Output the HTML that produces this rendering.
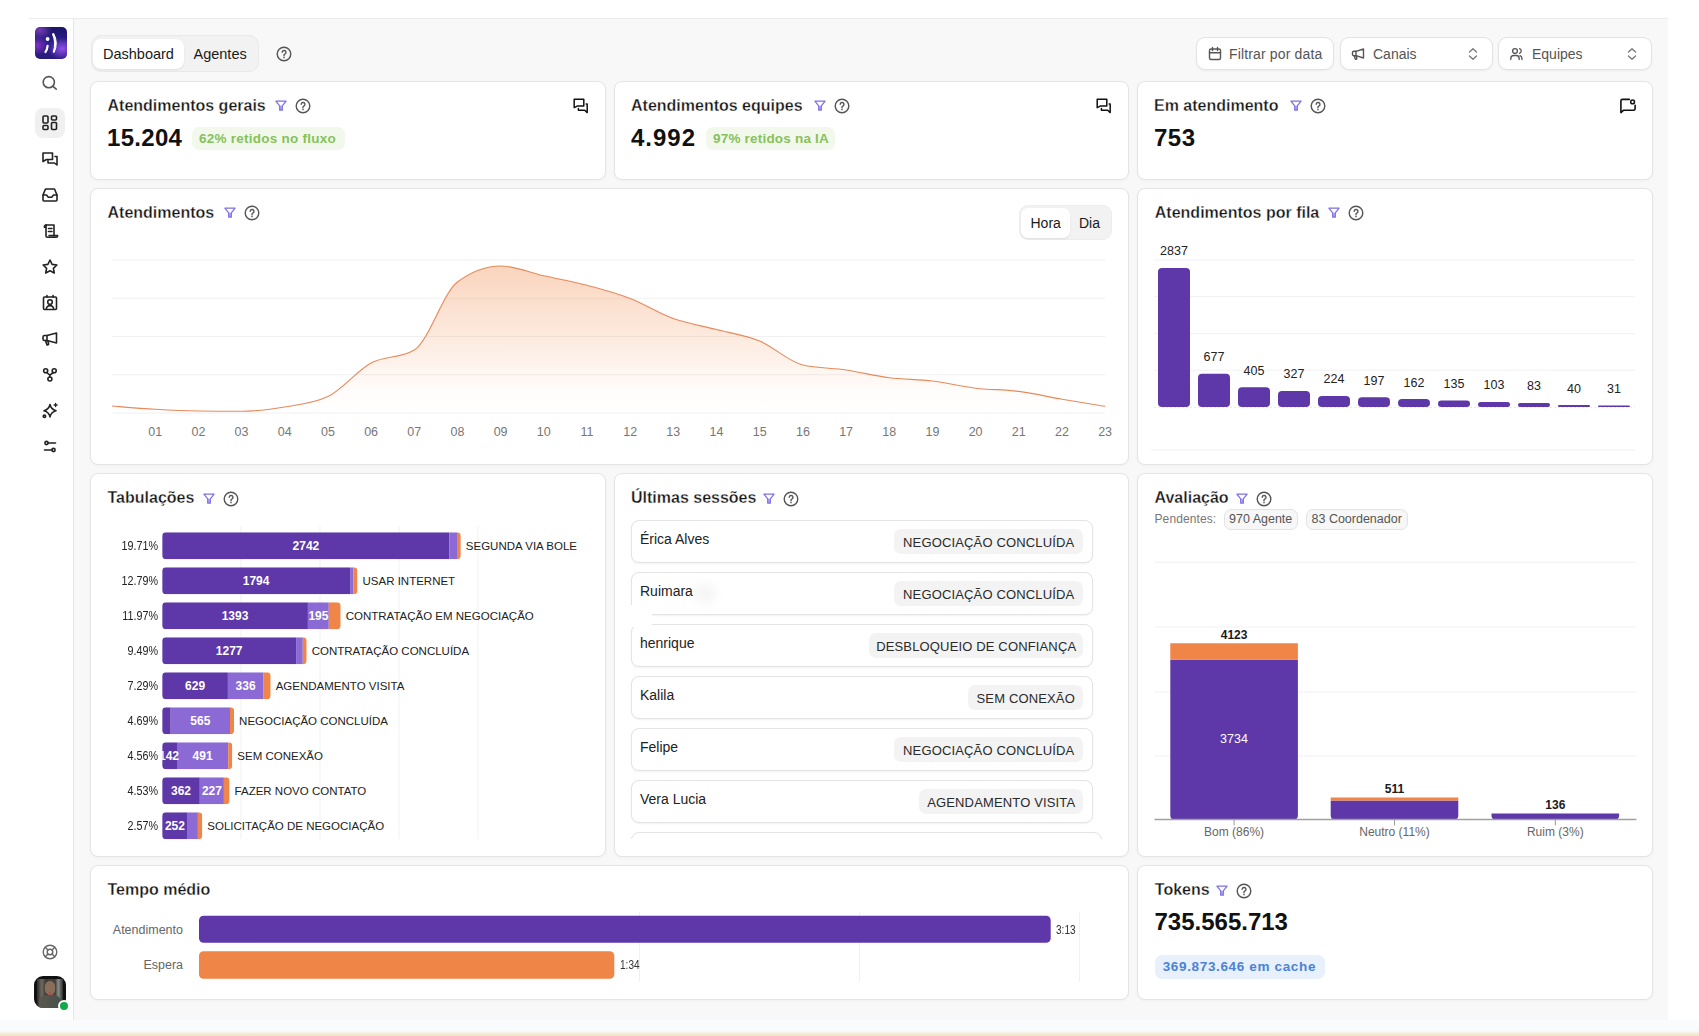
<!DOCTYPE html>
<html><head><meta charset="utf-8">
<style>
*{box-sizing:border-box;margin:0;padding:0}
html,body{width:1699px;height:1036px;overflow:hidden;background:#fff;font-family:"Liberation Sans",sans-serif;color:#1c1c1c;position:relative}
.a{position:absolute}
.t{position:absolute;line-height:1;white-space:nowrap}
#frame{left:29px;top:18px;width:1639px;height:1002px;background:#f8f8f8;border-top:1px solid #ececec}
#side{left:29px;top:18px;width:45px;height:1002px;background:#fff;border-right:1px solid #e6e6e6;border-top:1px solid #ececec}
#bottomstrip{left:0;top:1020px;width:1699px;height:16px;background:linear-gradient(#fbfbfc 0%,#f9fbfd 55%,#f8f9f8 70%,#f6f1e3 80%,#f2e8cc 90%,#f1e6c8 100%)}
.card{position:absolute;background:#fff;border:1px solid #e4e4e4;border-radius:8px;box-shadow:0 1px 3px rgba(0,0,0,0.035)}
.title{font-size:16px;font-weight:700;color:#151515;-webkit-text-stroke:0.3px #fff}
.big{font-size:24px;font-weight:700;color:#111}
.badge{position:absolute;border-radius:7px;background:#f2f9ec}
.btxt{font-size:13.5px;font-weight:700;color:#85c25a;letter-spacing:0.25px}
svg{position:absolute;overflow:visible}
.ic{fill:none;stroke:#222;stroke-width:1.6;stroke-linecap:round;stroke-linejoin:round}
</style></head><body>
<div id="frame" class="a"></div>
<div id="side" class="a"></div>
<div id="bottomstrip" class="a"></div>

<!-- logo -->
<div class="a" style="left:35px;top:27px;width:32px;height:32px;border-radius:5px;background:radial-gradient(ellipse 45% 35% at 85% 68%,rgba(150,80,240,0.95) 0%,rgba(150,80,240,0) 100%),radial-gradient(ellipse 35% 30% at 8% 58%,rgba(140,50,200,0.9) 0%,rgba(140,50,200,0) 100%),radial-gradient(ellipse 40% 30% at 15% 10%,rgba(140,70,200,0.8) 0%,rgba(140,70,200,0) 100%),linear-gradient(180deg,#1c1568 0%,#2a1f8a 50%,#2a1a7a 100%)"></div>
<svg style="left:35px;top:27px" width="32" height="32" viewBox="0 0 32 32">
<circle cx="12.6" cy="12" r="1.9" fill="#fff"/>
<path d="M12.6,18.8 Q12.2,22.3 10.5,25" stroke="#fff" stroke-width="2.2" fill="none" stroke-linecap="round"/>
<path d="M18.7,6.4 Q23.6,15.8 19.2,25.4 L18.2,25.1 Q21.4,15.8 17.4,6.9Z" fill="#fff" stroke="#fff" stroke-width="1" stroke-linejoin="round"/>
</svg>
<!-- sidebar icons -->
<div class="a" style="left:35px;top:108px;width:30px;height:30px;border-radius:8px;background:#f0f0f0"></div>
<svg style="left:0;top:0" width="1" height="1"></svg>
<!-- search -->
<svg style="left:41px;top:75px" width="18" height="18" viewBox="0 0 18 18"><circle cx="7.8" cy="7.2" r="5.6" class="ic" stroke="#555" style="stroke:#555"/><path d="M12,11.4L15.2,14.2" class="ic" style="stroke:#555"/></svg>
<!-- dashboard grid -->
<svg style="left:42px;top:115px" width="16" height="16" viewBox="0 0 16 16"><rect x="1" y="1" width="5" height="7" rx="1" class="ic"/><rect x="1" y="10.5" width="5" height="4" rx="1" class="ic"/><rect x="9.5" y="1" width="5" height="4" rx="1" class="ic"/><rect x="9.5" y="7.5" width="5" height="7" rx="1" class="ic"/></svg>
<!-- messages -->
<svg style="left:41px;top:150px" width="18" height="18" viewBox="0 0 18 18"><path d="M2,3h9.5v6.5H5.5L2,11.5Z" class="ic"/><path d="M14,6.5h2v8.5l-2.5-2H7v-2.5" class="ic"/></svg>
<!-- inbox -->
<svg style="left:41px;top:186px" width="18" height="18" viewBox="0 0 18 18"><path d="M2,9l2.5-6h9l2.5,6v5a1,1,0,0,1-1,1H3a1,1,0,0,1-1-1Z" class="ic"/><path d="M2,9h3.5l1.8,2.2h3.4L12.5,9H16" class="ic"/></svg>
<!-- script -->
<svg style="left:41px;top:222px" width="18" height="18" viewBox="0 0 18 18"><path d="M5,3h8v11" class="ic"/><path d="M5,3a1.6,1.6,0,0,0-1.6,1.6v0.6H5" class="ic"/><path d="M5,3v11a1.3,1.3,0,0,0,1.3,1.3h9a1.3,1.3,0,0,0,1.3-1.3v-0.5H8" class="ic"/><path d="M7.5,6.5h3.5M7.5,9.5h3.5" class="ic"/></svg>
<!-- star -->
<svg style="left:41px;top:258px" width="18" height="18" viewBox="0 0 18 18"><path d="M9,2l2.1,4.4,4.8,0.6-3.5,3.3,0.9,4.7L9,12.7l-4.3,2.3,0.9-4.7L2.1,7l4.8-0.6Z" class="ic"/></svg>
<!-- id badge -->
<svg style="left:41px;top:294px" width="18" height="18" viewBox="0 0 18 18"><rect x="2.5" y="3" width="13" height="12.5" rx="1" class="ic"/><circle cx="9" cy="8" r="2.3" class="ic"/><path d="M5.3,15.3a3.7,3.7,0,0,1,7.4,0" class="ic"/><path d="M6,1.5v1.5M12,1.5v1.5" class="ic"/></svg>
<!-- megaphone -->
<svg style="left:41px;top:330px" width="18" height="18" viewBox="0 0 18 18"><path d="M15.5,3v10L6,10.5H3.5a1.5,1.5,0,0,1-1.5-1.5V7a1.5,1.5,0,0,1,1.5-1.5H6Z" class="ic"/><path d="M6,5.5v5M4.5,10.5l1.3,4a1,1,0,0,0,1.8-0.8L6.8,10.8" class="ic"/></svg>
<!-- git fork -->
<svg style="left:41px;top:366px" width="18" height="18" viewBox="0 0 18 18"><circle cx="4.7" cy="4.7" r="2" class="ic"/><circle cx="13.2" cy="4.7" r="2" class="ic"/><circle cx="8.9" cy="13" r="2" class="ic"/><path d="M5.6,6.5L8.9,9.2L12.3,6.5M8.9,9.2V11" class="ic"/></svg>
<!-- sparkles -->
<svg style="left:41px;top:402px" width="18" height="18" viewBox="0 0 18 18"><path d="M9,2.5c0.7,3.6,2,5.1,6,6.2c-4,1.1-5.3,2.6-6,6.2c-0.7-3.6-2-5.1-6-6.2C7,7.6,8.3,6.1,9,2.5Z" class="ic"/><path d="M14.6,1.5v3M13.1,3h3" class="ic" style="stroke-width:1.3"/><circle cx="3.4" cy="14.3" r="1.2" class="ic"/></svg>
<!-- adjustments -->
<svg style="left:41px;top:438px" width="18" height="18" viewBox="0 0 18 18"><circle cx="5.5" cy="5" r="1.6" class="ic"/><path d="M7.1,5h7.4" class="ic"/><circle cx="12.5" cy="12" r="1.6" class="ic"/><path d="M3.5,12h7.4" class="ic"/></svg>
<!-- lifebuoy -->
<svg style="left:41px;top:943px" width="18" height="18" viewBox="0 0 18 18"><circle cx="9" cy="9" r="6.8" class="ic" style="stroke:#666;stroke-width:1.4"/><circle cx="9" cy="9" r="2.8" class="ic" style="stroke:#666;stroke-width:1.4"/><path d="M4.2,4.2l2.8,2.8M13.8,4.2l-2.8,2.8M4.2,13.8l2.8-2.8M13.8,13.8l-2.8-2.8" class="ic" style="stroke:#666;stroke-width:1.4"/></svg>
<!-- avatar -->
<div class="a" style="left:34px;top:976px;width:32px;height:32px;border-radius:9px;overflow:hidden;background:#111">
  <div class="a" style="left:3px;top:3px;width:26px;height:29px;background:linear-gradient(90deg,#2b2a26 0%,#6d6a60 18%,#3a3830 35%,#4a4034 50%,#3b4040 70%,#8a8f8a 82%,#2a2c2a 100%)"></div>
  <div class="a" style="left:11px;top:5px;width:10px;height:14px;border-radius:5px;background:#8a6e5c"></div>
  <div class="a" style="left:14px;top:16px;width:5px;height:5px;border-radius:2px;background:#9c5d4f"></div>
  <div class="a" style="left:5px;top:19px;width:22px;height:14px;border-radius:7px 7px 0 0;background:linear-gradient(90deg,#5b584c,#47504c)"></div>
</div>
<div class="a" style="left:58px;top:1000px;width:12px;height:12px;border-radius:50%;background:#15a84a;border:2px solid #fff"></div>

<!-- top tabs -->
<div class="a" style="left:91px;top:35px;width:168px;height:37px;background:#f2f2f2;border:1px solid #e9e9e9;border-radius:10px"></div>
<div class="a" style="left:93px;top:39px;width:91px;height:30px;background:#fff;border-radius:8px;box-shadow:0 1px 2px rgba(0,0,0,0.08)"></div>
<div class="t" style="left:103px;top:46.6px;font-size:14.5px;color:#1a1a1a">Dashboard</div>
<div class="t" style="left:193.5px;top:46.6px;font-size:14.5px;color:#1a1a1a">Agentes</div>
<svg style="left:276px;top:46px" width="16" height="16" viewBox="0 0 16 16"><circle cx="8" cy="8" r="6.8" fill="none" stroke="#555" stroke-width="1.4"/><path d="M6.2,6.3a1.9,1.9,0,1,1,2.6,1.8c-0.5,0.2-0.8,0.6-0.8,1.1v0.5" fill="none" stroke="#555" stroke-width="1.4" stroke-linecap="round"/><circle cx="8" cy="11.6" r="0.8" fill="#555"/></svg>

<!-- filters -->
<div class="a" style="left:1196px;top:37px;width:138px;height:33px;background:#fff;border:1px solid #e3e3e3;border-radius:9px;box-shadow:0 1px 2px rgba(0,0,0,0.05)"></div>
<svg style="left:1207px;top:46px" width="16" height="16" viewBox="0 0 16 16"><rect x="2.5" y="3" width="11" height="10.5" rx="1.5" fill="none" stroke="#555" stroke-width="1.4"/><path d="M2.5,6.8h11M5.5,1.5v3M10.5,1.5v3" fill="none" stroke="#555" stroke-width="1.4" stroke-linecap="round"/></svg>
<div class="t" style="left:1229px;top:47px;font-size:14px;color:#555;letter-spacing:0.15px">Filtrar por data</div>

<div class="a" style="left:1340px;top:37px;width:153px;height:33px;background:#fff;border:1px solid #e3e3e3;border-radius:9px;box-shadow:0 1px 2px rgba(0,0,0,0.05)"></div>
<svg style="left:1350px;top:46px" width="16" height="16" viewBox="0 0 16 16"><path d="M13.5,3v9L6,9.7H3.8A1.3,1.3,0,0,1,2.5,8.4V6.6A1.3,1.3,0,0,1,3.8,5.3H6Z" fill="none" stroke="#555" stroke-width="1.4" stroke-linejoin="round"/><path d="M6,5.3v4.4M4.3,9.7l1,3.3a0.9,0.9,0,0,0,1.6-0.6L6.3,9.8" fill="none" stroke="#555" stroke-width="1.4" stroke-linecap="round" stroke-linejoin="round"/></svg>
<div class="t" style="left:1373px;top:47px;font-size:14px;color:#555">Canais</div>
<svg style="left:1466px;top:46px" width="14" height="16" viewBox="0 0 14 16"><path d="M3.5,6L7,2.8L10.5,6M3.5,10L7,13.2L10.5,10" fill="none" stroke="#777" stroke-width="1.3" stroke-linecap="round" stroke-linejoin="round"/></svg>

<div class="a" style="left:1498px;top:37px;width:154px;height:33px;background:#fff;border:1px solid #e3e3e3;border-radius:9px;box-shadow:0 1px 2px rgba(0,0,0,0.05)"></div>
<svg style="left:1509px;top:46px" width="16" height="16" viewBox="0 0 16 16"><circle cx="6" cy="5" r="2.4" fill="none" stroke="#555" stroke-width="1.3"/><path d="M1.8,13.5v-1a3,3,0,0,1,3-3h2.4a3,3,0,0,1,3,3v1M10.5,2.7a2.4,2.4,0,0,1,0,4.6M13,13.5v-1a3,3,0,0,0-2-2.8" fill="none" stroke="#555" stroke-width="1.3" stroke-linecap="round"/></svg>
<div class="t" style="left:1532px;top:47px;font-size:14px;color:#555">Equipes</div>
<svg style="left:1625px;top:46px" width="14" height="16" viewBox="0 0 14 16"><path d="M3.5,6L7,2.8L10.5,6M3.5,10L7,13.2L10.5,10" fill="none" stroke="#777" stroke-width="1.3" stroke-linecap="round" stroke-linejoin="round"/></svg>

<!-- row 1 cards -->
<div class="card" style="left:90px;top:81px;width:516px;height:99px"></div>
<div class="card" style="left:614px;top:81px;width:515px;height:99px"></div>
<div class="card" style="left:1137px;top:81px;width:516px;height:99px"></div>

<div class="t title" style="left:107.5px;top:97.7px">Atendimentos gerais</div>
<svg style="left:274.0px;top:99.0px" width="14" height="14" viewBox="0 0 14 14"><rect x="5.7" y="6.8" width="2.6" height="4.2" fill="#b5abf7"/><path d="M1.9,2.2h10.2L8.3,6.8V11.2H5.7V6.8Z" fill="none" stroke="#7c70ea" stroke-width="1.25" stroke-linejoin="round"/></svg>
<svg style="left:295.0px;top:98.0px" width="16" height="16" viewBox="0 0 16 16"><circle cx="8" cy="8" r="6.8" fill="none" stroke="#555" stroke-width="1.4"/><path d="M6.2,6.3a1.9,1.9,0,1,1,2.6,1.8c-0.5,0.2-0.8,0.6-0.8,1.1v0.5" fill="none" stroke="#555" stroke-width="1.4" stroke-linecap="round"/><circle cx="8" cy="11.6" r="0.8" fill="#555"/></svg>
<div class="t big" style="left:107px;top:125.5px;letter-spacing:0.3px">15.204</div>
<div class="badge" style="left:192px;top:127px;width:153px;height:23px"></div>
<div class="t btxt" style="left:199px;top:132.1px">62% retidos no fluxo</div>
<svg style="left:572.0px;top:97.0px" width="18" height="18" viewBox="0 0 18 18"><path d="M2.2,2.3h9.6v6.8H5.2L2.2,10.7Z" fill="none" stroke="#111" stroke-width="1.5" stroke-linejoin="round"/><path d="M14.2,6.9h1v8.7l-2.5-2.3H6.4V11.6" fill="none" stroke="#111" stroke-width="1.5" stroke-linecap="round" stroke-linejoin="round"/></svg>

<div class="t title" style="left:631px;top:97.7px">Atendimentos equipes</div>
<svg style="left:813.0px;top:99.0px" width="14" height="14" viewBox="0 0 14 14"><rect x="5.7" y="6.8" width="2.6" height="4.2" fill="#b5abf7"/><path d="M1.9,2.2h10.2L8.3,6.8V11.2H5.7V6.8Z" fill="none" stroke="#7c70ea" stroke-width="1.25" stroke-linejoin="round"/></svg>
<svg style="left:834.0px;top:98.0px" width="16" height="16" viewBox="0 0 16 16"><circle cx="8" cy="8" r="6.8" fill="none" stroke="#555" stroke-width="1.4"/><path d="M6.2,6.3a1.9,1.9,0,1,1,2.6,1.8c-0.5,0.2-0.8,0.6-0.8,1.1v0.5" fill="none" stroke="#555" stroke-width="1.4" stroke-linecap="round"/><circle cx="8" cy="11.6" r="0.8" fill="#555"/></svg>
<div class="t big" style="left:631px;top:125.5px;letter-spacing:1px">4.992</div>
<div class="badge" style="left:706px;top:127px;width:129px;height:23px"></div>
<div class="t btxt" style="left:713px;top:132.1px;letter-spacing:0.2px">97% retidos na IA</div>
<svg style="left:1095.0px;top:97.0px" width="18" height="18" viewBox="0 0 18 18"><path d="M2.2,2.3h9.6v6.8H5.2L2.2,10.7Z" fill="none" stroke="#111" stroke-width="1.5" stroke-linejoin="round"/><path d="M14.2,6.9h1v8.7l-2.5-2.3H6.4V11.6" fill="none" stroke="#111" stroke-width="1.5" stroke-linecap="round" stroke-linejoin="round"/></svg>

<div class="t title" style="left:1154px;top:97.7px">Em atendimento</div>
<svg style="left:1289.0px;top:99.0px" width="14" height="14" viewBox="0 0 14 14"><rect x="5.7" y="6.8" width="2.6" height="4.2" fill="#b5abf7"/><path d="M1.9,2.2h10.2L8.3,6.8V11.2H5.7V6.8Z" fill="none" stroke="#7c70ea" stroke-width="1.25" stroke-linejoin="round"/></svg>
<svg style="left:1310.0px;top:98.0px" width="16" height="16" viewBox="0 0 16 16"><circle cx="8" cy="8" r="6.8" fill="none" stroke="#555" stroke-width="1.4"/><path d="M6.2,6.3a1.9,1.9,0,1,1,2.6,1.8c-0.5,0.2-0.8,0.6-0.8,1.1v0.5" fill="none" stroke="#555" stroke-width="1.4" stroke-linecap="round"/><circle cx="8" cy="11.6" r="0.8" fill="#555"/></svg>
<div class="t big" style="left:1154px;top:125.5px;letter-spacing:0.5px">753</div>
<svg style="left:1619px;top:97px" width="18" height="18" viewBox="0 0 18 18"><path d="M10.3,2.4H3.4A1.5,1.5,0,0,0,1.9,3.9V15.6L4.4,13.3H14.6A1.5,1.5,0,0,0,16.1,11.8V8.4" fill="none" stroke="#111" stroke-width="1.6" stroke-linecap="round" stroke-linejoin="round"/><circle cx="13.6" cy="4.9" r="1.9" fill="none" stroke="#111" stroke-width="1.5"/></svg>

<div class="card" style="left:90px;top:188px;width:1039px;height:277px"></div>
<div class="t title" style="left:107.5px;top:204.66px">Atendimentos</div>
<svg style="left:222.8px;top:205.9px" width="14" height="14" viewBox="0 0 14 14"><rect x="5.7" y="6.8" width="2.6" height="4.2" fill="#b5abf7"/><path d="M1.9,2.2h10.2L8.3,6.8V11.2H5.7V6.8Z" fill="none" stroke="#7c70ea" stroke-width="1.25" stroke-linejoin="round"/></svg>
<svg style="left:243.9px;top:204.9px" width="16" height="16" viewBox="0 0 16 16"><circle cx="8" cy="8" r="6.8" fill="none" stroke="#555" stroke-width="1.4"/><path d="M6.2,6.3a1.9,1.9,0,1,1,2.6,1.8c-0.5,0.2-0.8,0.6-0.8,1.1v0.5" fill="none" stroke="#555" stroke-width="1.4" stroke-linecap="round"/><circle cx="8" cy="11.6" r="0.8" fill="#555"/></svg>
<div class="a" style="left:1019px;top:205px;width:93px;height:35px;background:#f2f2f2;border:1px solid #ededed;border-radius:9px"></div>
<div class="a" style="left:1021px;top:208px;width:49px;height:30px;background:#fff;border-radius:7px;box-shadow:0 1px 2px rgba(0,0,0,0.08)"></div>
<div class="t" style="left:1030.5px;top:215.9px;font-size:14px;color:#1a1a1a">Hora</div>
<div class="t" style="left:1079px;top:215.9px;font-size:14px;color:#1a1a1a">Dia</div>
<svg style="left:0;top:0" width="1699" height="1036" viewBox="0 0 1699 1036">
<defs><linearGradient id="ag" x1="0" y1="266" x2="0" y2="413" gradientUnits="userSpaceOnUse"><stop offset="0" stop-color="#f29a63" stop-opacity="0.42"/><stop offset="0.5" stop-color="#f29a63" stop-opacity="0.2"/><stop offset="0.85" stop-color="#f29a63" stop-opacity="0.03"/><stop offset="1" stop-color="#f29a63" stop-opacity="0"/></linearGradient></defs>
<line x1="112" y1="260" x2="1105" y2="260" stroke="#f0f0f0" stroke-width="1"/>
<line x1="112" y1="298.2" x2="1105" y2="298.2" stroke="#f0f0f0" stroke-width="1"/>
<line x1="112" y1="336.5" x2="1105" y2="336.5" stroke="#f0f0f0" stroke-width="1"/>
<line x1="112" y1="374.7" x2="1105" y2="374.7" stroke="#f0f0f0" stroke-width="1"/>
<line x1="112" y1="413" x2="1105" y2="413" stroke="#f0f0f0" stroke-width="1"/>
<path d="M112.0,406.0C126.4,407.2,140.8,408.5,155.2,409.3C169.6,410.1,184.0,410.8,198.4,411.0C212.8,411.2,227.1,411.3,241.5,411.3C255.9,411.3,270.3,409.4,284.7,407.0C299.1,404.6,313.5,403.5,327.9,396.6C342.3,389.7,356.7,370.8,371.1,363.0C385.5,355.2,399.9,358.7,414.3,350.0C428.7,341.3,443.0,292.7,457.4,282.0C471.8,271.3,486.2,266.0,500.6,266.0C515.0,266.0,529.4,272.6,543.8,275.8C558.2,279.0,572.6,281.5,587.0,285.3C601.4,289.1,615.8,293.0,630.2,298.5C644.6,304.0,658.9,313.3,673.3,318.5C687.7,323.7,702.1,325.8,716.5,329.5C730.9,333.2,745.3,335.1,759.7,341.0C774.1,346.9,788.5,361.7,802.9,365.0C817.3,368.3,831.7,367.9,846.1,370.0C860.5,372.1,874.8,375.9,889.2,377.7C903.6,379.5,918.0,379.2,932.4,381.0C946.8,382.8,961.2,386.5,975.6,388.2C990.0,389.9,1004.4,389.5,1018.8,391.4C1033.2,393.2,1047.6,396.8,1062.0,399.3C1076.4,401.8,1090.7,404.0,1105.1,406.3L1105.1,413L112.0,413Z" fill="url(#ag)"/>
<path d="M112.0,406.0C126.4,407.2,140.8,408.5,155.2,409.3C169.6,410.1,184.0,410.8,198.4,411.0C212.8,411.2,227.1,411.3,241.5,411.3C255.9,411.3,270.3,409.4,284.7,407.0C299.1,404.6,313.5,403.5,327.9,396.6C342.3,389.7,356.7,370.8,371.1,363.0C385.5,355.2,399.9,358.7,414.3,350.0C428.7,341.3,443.0,292.7,457.4,282.0C471.8,271.3,486.2,266.0,500.6,266.0C515.0,266.0,529.4,272.6,543.8,275.8C558.2,279.0,572.6,281.5,587.0,285.3C601.4,289.1,615.8,293.0,630.2,298.5C644.6,304.0,658.9,313.3,673.3,318.5C687.7,323.7,702.1,325.8,716.5,329.5C730.9,333.2,745.3,335.1,759.7,341.0C774.1,346.9,788.5,361.7,802.9,365.0C817.3,368.3,831.7,367.9,846.1,370.0C860.5,372.1,874.8,375.9,889.2,377.7C903.6,379.5,918.0,379.2,932.4,381.0C946.8,382.8,961.2,386.5,975.6,388.2C990.0,389.9,1004.4,389.5,1018.8,391.4C1033.2,393.2,1047.6,396.8,1062.0,399.3C1076.4,401.8,1090.7,404.0,1105.1,406.3" fill="none" stroke="#e8895a" stroke-width="1.15"/>
</svg>
<div class="t" style="left:135.2px;width:40px;text-align:center;top:426.0px;font-size:12.5px;color:#777">01</div>
<div class="t" style="left:178.4px;width:40px;text-align:center;top:426.0px;font-size:12.5px;color:#777">02</div>
<div class="t" style="left:221.5px;width:40px;text-align:center;top:426.0px;font-size:12.5px;color:#777">03</div>
<div class="t" style="left:264.7px;width:40px;text-align:center;top:426.0px;font-size:12.5px;color:#777">04</div>
<div class="t" style="left:307.9px;width:40px;text-align:center;top:426.0px;font-size:12.5px;color:#777">05</div>
<div class="t" style="left:351.1px;width:40px;text-align:center;top:426.0px;font-size:12.5px;color:#777">06</div>
<div class="t" style="left:394.3px;width:40px;text-align:center;top:426.0px;font-size:12.5px;color:#777">07</div>
<div class="t" style="left:437.4px;width:40px;text-align:center;top:426.0px;font-size:12.5px;color:#777">08</div>
<div class="t" style="left:480.6px;width:40px;text-align:center;top:426.0px;font-size:12.5px;color:#777">09</div>
<div class="t" style="left:523.8px;width:40px;text-align:center;top:426.0px;font-size:12.5px;color:#777">10</div>
<div class="t" style="left:567.0px;width:40px;text-align:center;top:426.0px;font-size:12.5px;color:#777">11</div>
<div class="t" style="left:610.2px;width:40px;text-align:center;top:426.0px;font-size:12.5px;color:#777">12</div>
<div class="t" style="left:653.3px;width:40px;text-align:center;top:426.0px;font-size:12.5px;color:#777">13</div>
<div class="t" style="left:696.5px;width:40px;text-align:center;top:426.0px;font-size:12.5px;color:#777">14</div>
<div class="t" style="left:739.7px;width:40px;text-align:center;top:426.0px;font-size:12.5px;color:#777">15</div>
<div class="t" style="left:782.9px;width:40px;text-align:center;top:426.0px;font-size:12.5px;color:#777">16</div>
<div class="t" style="left:826.1px;width:40px;text-align:center;top:426.0px;font-size:12.5px;color:#777">17</div>
<div class="t" style="left:869.2px;width:40px;text-align:center;top:426.0px;font-size:12.5px;color:#777">18</div>
<div class="t" style="left:912.4px;width:40px;text-align:center;top:426.0px;font-size:12.5px;color:#777">19</div>
<div class="t" style="left:955.6px;width:40px;text-align:center;top:426.0px;font-size:12.5px;color:#777">20</div>
<div class="t" style="left:998.8px;width:40px;text-align:center;top:426.0px;font-size:12.5px;color:#777">21</div>
<div class="t" style="left:1042.0px;width:40px;text-align:center;top:426.0px;font-size:12.5px;color:#777">22</div>
<div class="t" style="left:1085.1px;width:40px;text-align:center;top:426.0px;font-size:12.5px;color:#777">23</div>
<div class="card" style="left:1137px;top:188px;width:516px;height:277px"></div>
<div class="t title" style="left:1154.8px;top:204.66px">Atendimentos por fila</div>
<svg style="left:1327.0px;top:205.9px" width="14" height="14" viewBox="0 0 14 14"><rect x="5.7" y="6.8" width="2.6" height="4.2" fill="#b5abf7"/><path d="M1.9,2.2h10.2L8.3,6.8V11.2H5.7V6.8Z" fill="none" stroke="#7c70ea" stroke-width="1.25" stroke-linejoin="round"/></svg>
<svg style="left:1347.7px;top:204.9px" width="16" height="16" viewBox="0 0 16 16"><circle cx="8" cy="8" r="6.8" fill="none" stroke="#555" stroke-width="1.4"/><path d="M6.2,6.3a1.9,1.9,0,1,1,2.6,1.8c-0.5,0.2-0.8,0.6-0.8,1.1v0.5" fill="none" stroke="#555" stroke-width="1.4" stroke-linecap="round"/><circle cx="8" cy="11.6" r="0.8" fill="#555"/></svg>
<svg style="left:0;top:0" width="1699" height="1036" viewBox="0 0 1699 1036">
<line x1="1154" y1="260" x2="1635" y2="260" stroke="#f1f1f1" stroke-width="1"/>
<line x1="1154" y1="296.7" x2="1635" y2="296.7" stroke="#f1f1f1" stroke-width="1"/>
<line x1="1154" y1="333.5" x2="1635" y2="333.5" stroke="#f1f1f1" stroke-width="1"/>
<line x1="1154" y1="370.2" x2="1635" y2="370.2" stroke="#f1f1f1" stroke-width="1"/>
<line x1="1154" y1="407.5" x2="1635" y2="407.5" stroke="#ebebeb" stroke-width="1" stroke-dasharray="2,2"/>
<line x1="1151" y1="450" x2="1635" y2="450" stroke="#f1f1f1" stroke-width="1"/>
<rect x="1158" y="268.0" width="32" height="139.0" rx="4.0" fill="#5e37a8"/>
<rect x="1198" y="373.8" width="32" height="33.2" rx="4.0" fill="#5e37a8"/>
<rect x="1238" y="387.2" width="32" height="19.8" rx="4.0" fill="#5e37a8"/>
<rect x="1278" y="391.0" width="32" height="16.0" rx="4.0" fill="#5e37a8"/>
<rect x="1318" y="396.0" width="32" height="11.0" rx="4.0" fill="#5e37a8"/>
<rect x="1358" y="397.3" width="32" height="9.7" rx="4.0" fill="#5e37a8"/>
<rect x="1398" y="399.1" width="32" height="7.9" rx="4.0" fill="#5e37a8"/>
<rect x="1438" y="400.4" width="32" height="6.6" rx="3.3" fill="#5e37a8"/>
<rect x="1478" y="402.0" width="32" height="5.0" rx="2.5" fill="#5e37a8"/>
<rect x="1518" y="402.9" width="32" height="4.1" rx="2.0" fill="#5e37a8"/>
<rect x="1558" y="405.0" width="32" height="2.0" rx="1.0" fill="#5e37a8"/>
<rect x="1598" y="405.5" width="32" height="1.5" rx="0.8" fill="#5e37a8"/>
</svg>
<div class="t" style="left:1149px;width:50px;text-align:center;top:245.4px;font-size:12.5px;color:#222">2837</div>
<div class="t" style="left:1189px;width:50px;text-align:center;top:351.2px;font-size:12.5px;color:#222">677</div>
<div class="t" style="left:1229px;width:50px;text-align:center;top:364.6px;font-size:12.5px;color:#222">405</div>
<div class="t" style="left:1269px;width:50px;text-align:center;top:368.4px;font-size:12.5px;color:#222">327</div>
<div class="t" style="left:1309px;width:50px;text-align:center;top:373.4px;font-size:12.5px;color:#222">224</div>
<div class="t" style="left:1349px;width:50px;text-align:center;top:374.8px;font-size:12.5px;color:#222">197</div>
<div class="t" style="left:1389px;width:50px;text-align:center;top:376.5px;font-size:12.5px;color:#222">162</div>
<div class="t" style="left:1429px;width:50px;text-align:center;top:377.8px;font-size:12.5px;color:#222">135</div>
<div class="t" style="left:1469px;width:50px;text-align:center;top:379.4px;font-size:12.5px;color:#222">103</div>
<div class="t" style="left:1509px;width:50px;text-align:center;top:380.4px;font-size:12.5px;color:#222">83</div>
<div class="t" style="left:1549px;width:50px;text-align:center;top:382.5px;font-size:12.5px;color:#222">40</div>
<div class="t" style="left:1589px;width:50px;text-align:center;top:382.9px;font-size:12.5px;color:#222">31</div>
<div class="card" style="left:90px;top:473px;width:516px;height:384px"></div>
<div class="t title" style="left:107.5px;top:490.06px">Tabulações</div>
<svg style="left:201.5px;top:491.5px" width="14" height="14" viewBox="0 0 14 14"><rect x="5.7" y="6.8" width="2.6" height="4.2" fill="#b5abf7"/><path d="M1.9,2.2h10.2L8.3,6.8V11.2H5.7V6.8Z" fill="none" stroke="#7c70ea" stroke-width="1.25" stroke-linejoin="round"/></svg>
<svg style="left:223.0px;top:490.5px" width="16" height="16" viewBox="0 0 16 16"><circle cx="8" cy="8" r="6.8" fill="none" stroke="#555" stroke-width="1.4"/><path d="M6.2,6.3a1.9,1.9,0,1,1,2.6,1.8c-0.5,0.2-0.8,0.6-0.8,1.1v0.5" fill="none" stroke="#555" stroke-width="1.4" stroke-linecap="round"/><circle cx="8" cy="11.6" r="0.8" fill="#555"/></svg>
<svg style="left:0;top:0" width="1699" height="1036" viewBox="0 0 1699 1036">
<line x1="241" y1="526" x2="241" y2="839" stroke="#f1f1f1" stroke-width="1"/>
<line x1="320" y1="526" x2="320" y2="839" stroke="#f1f1f1" stroke-width="1"/>
<line x1="399" y1="526" x2="399" y2="839" stroke="#f1f1f1" stroke-width="1"/>
<line x1="478" y1="526" x2="478" y2="839" stroke="#f1f1f1" stroke-width="1"/>
<defs>
<clipPath id="tc0"><rect x="162.2" y="532.3" width="298.6" height="27" rx="4"/></clipPath>
<clipPath id="tc1"><rect x="162.2" y="567.3" width="195.3" height="27" rx="4"/></clipPath>
<clipPath id="tc2"><rect x="162.2" y="602.3" width="178.5" height="27" rx="4"/></clipPath>
<clipPath id="tc3"><rect x="162.2" y="637.3" width="144.5" height="27" rx="4"/></clipPath>
<clipPath id="tc4"><rect x="162.2" y="672.3" width="108.5" height="27" rx="4"/></clipPath>
<clipPath id="tc5"><rect x="162.2" y="707.3" width="71.9" height="27" rx="4"/></clipPath>
<clipPath id="tc6"><rect x="162.2" y="742.3" width="70.1" height="27" rx="4"/></clipPath>
<clipPath id="tc7"><rect x="162.2" y="777.3" width="67.4" height="27" rx="4"/></clipPath>
<clipPath id="tc8"><rect x="162.2" y="812.3" width="40.1" height="27" rx="4"/></clipPath>
</defs>
<g clip-path="url(#tc0)"><rect x="162.2" y="532.3" width="287.3" height="27" fill="#5e37a8"/><rect x="449.5" y="532.3" width="7.5" height="27" fill="#8b6ad6"/><rect x="457" y="532.3" width="3.8" height="27" fill="#ef8547"/><text x="305.9" y="550.0" text-anchor="middle" font-family="Liberation Sans" font-weight="700" font-size="12" fill="#fff">2742</text></g>
<g clip-path="url(#tc1)"><rect x="162.2" y="567.3" width="187.9" height="27" fill="#5e37a8"/><rect x="350.1" y="567.3" width="3.4" height="27" fill="#8b6ad6"/><rect x="353.5" y="567.3" width="4.0" height="27" fill="#ef8547"/><text x="256.1" y="585.0" text-anchor="middle" font-family="Liberation Sans" font-weight="700" font-size="12" fill="#fff">1794</text></g>
<g clip-path="url(#tc2)"><rect x="162.2" y="602.3" width="145.7" height="27" fill="#5e37a8"/><rect x="307.9" y="602.3" width="20.9" height="27" fill="#8b6ad6"/><rect x="328.8" y="602.3" width="11.9" height="27" fill="#ef8547"/><text x="235.0" y="620.0" text-anchor="middle" font-family="Liberation Sans" font-weight="700" font-size="12" fill="#fff">1393</text><text x="318.4" y="620.0" text-anchor="middle" font-family="Liberation Sans" font-weight="700" font-size="12" fill="#fff">195</text></g>
<g clip-path="url(#tc3)"><rect x="162.2" y="637.3" width="133.9" height="27" fill="#5e37a8"/><rect x="296.1" y="637.3" width="6.7" height="27" fill="#8b6ad6"/><rect x="302.8" y="637.3" width="3.9" height="27" fill="#ef8547"/><text x="229.2" y="655.0" text-anchor="middle" font-family="Liberation Sans" font-weight="700" font-size="12" fill="#fff">1277</text></g>
<g clip-path="url(#tc4)"><rect x="162.2" y="672.3" width="65.7" height="27" fill="#5e37a8"/><rect x="227.9" y="672.3" width="35.3" height="27" fill="#8b6ad6"/><rect x="263.2" y="672.3" width="7.5" height="27" fill="#ef8547"/><text x="195.1" y="690.0" text-anchor="middle" font-family="Liberation Sans" font-weight="700" font-size="12" fill="#fff">629</text><text x="245.6" y="690.0" text-anchor="middle" font-family="Liberation Sans" font-weight="700" font-size="12" fill="#fff">336</text></g>
<g clip-path="url(#tc5)"><rect x="162.2" y="707.3" width="8.5" height="27" fill="#5e37a8"/><rect x="170.7" y="707.3" width="59.3" height="27" fill="#8b6ad6"/><rect x="230" y="707.3" width="4.1" height="27" fill="#ef8547"/><text x="200.3" y="725.0" text-anchor="middle" font-family="Liberation Sans" font-weight="700" font-size="12" fill="#fff">565</text></g>
<g clip-path="url(#tc6)"><rect x="162.2" y="742.3" width="14.8" height="27" fill="#5e37a8"/><rect x="177" y="742.3" width="51.2" height="27" fill="#8b6ad6"/><rect x="228.2" y="742.3" width="4.1" height="27" fill="#ef8547"/><text x="169.0" y="760.0" text-anchor="middle" font-family="Liberation Sans" font-weight="700" font-size="12" fill="#fff">142</text><text x="202.6" y="760.0" text-anchor="middle" font-family="Liberation Sans" font-weight="700" font-size="12" fill="#fff">491</text></g>
<g clip-path="url(#tc7)"><rect x="162.2" y="777.3" width="37.6" height="27" fill="#5e37a8"/><rect x="199.8" y="777.3" width="24.1" height="27" fill="#8b6ad6"/><rect x="223.9" y="777.3" width="5.7" height="27" fill="#ef8547"/><text x="181.0" y="795.0" text-anchor="middle" font-family="Liberation Sans" font-weight="700" font-size="12" fill="#fff">362</text><text x="211.9" y="795.0" text-anchor="middle" font-family="Liberation Sans" font-weight="700" font-size="12" fill="#fff">227</text></g>
<g clip-path="url(#tc8)"><rect x="162.2" y="812.3" width="25.5" height="27" fill="#5e37a8"/><rect x="187.7" y="812.3" width="10.2" height="27" fill="#8b6ad6"/><rect x="197.9" y="812.3" width="4.4" height="27" fill="#ef8547"/><text x="174.9" y="830.0" text-anchor="middle" font-family="Liberation Sans" font-weight="700" font-size="12" fill="#fff">252</text></g>
</svg>
<div class="t" style="left:97.6px;width:60px;text-align:right;top:540.32px;font-size:12.5px;color:#222;transform:scaleX(0.86);transform-origin:100% 50%">19.71%</div>
<div class="t" style="left:465.8px;top:541.07px;font-size:11.5px;color:#222">SEGUNDA VIA BOLE</div>
<div class="t" style="left:97.6px;width:60px;text-align:right;top:575.32px;font-size:12.5px;color:#222;transform:scaleX(0.86);transform-origin:100% 50%">12.79%</div>
<div class="t" style="left:362.5px;top:576.07px;font-size:11.5px;color:#222">USAR INTERNET</div>
<div class="t" style="left:97.6px;width:60px;text-align:right;top:610.32px;font-size:12.5px;color:#222;transform:scaleX(0.86);transform-origin:100% 50%">11.97%</div>
<div class="t" style="left:345.7px;top:611.07px;font-size:11.5px;color:#222">CONTRATAÇÃO EM NEGOCIAÇÃO</div>
<div class="t" style="left:97.6px;width:60px;text-align:right;top:645.32px;font-size:12.5px;color:#222;transform:scaleX(0.86);transform-origin:100% 50%">9.49%</div>
<div class="t" style="left:311.7px;top:646.07px;font-size:11.5px;color:#222">CONTRATAÇÃO CONCLUÍDA</div>
<div class="t" style="left:97.6px;width:60px;text-align:right;top:680.32px;font-size:12.5px;color:#222;transform:scaleX(0.86);transform-origin:100% 50%">7.29%</div>
<div class="t" style="left:275.7px;top:681.07px;font-size:11.5px;color:#222">AGENDAMENTO VISITA</div>
<div class="t" style="left:97.6px;width:60px;text-align:right;top:715.32px;font-size:12.5px;color:#222;transform:scaleX(0.86);transform-origin:100% 50%">4.69%</div>
<div class="t" style="left:239.1px;top:716.07px;font-size:11.5px;color:#222">NEGOCIAÇÃO CONCLUÍDA</div>
<div class="t" style="left:97.6px;width:60px;text-align:right;top:750.32px;font-size:12.5px;color:#222;transform:scaleX(0.86);transform-origin:100% 50%">4.56%</div>
<div class="t" style="left:237.3px;top:751.07px;font-size:11.5px;color:#222">SEM CONEXÃO</div>
<div class="t" style="left:97.6px;width:60px;text-align:right;top:785.32px;font-size:12.5px;color:#222;transform:scaleX(0.86);transform-origin:100% 50%">4.53%</div>
<div class="t" style="left:234.6px;top:786.07px;font-size:11.5px;color:#222">FAZER NOVO CONTATO</div>
<div class="t" style="left:97.6px;width:60px;text-align:right;top:820.32px;font-size:12.5px;color:#222;transform:scaleX(0.86);transform-origin:100% 50%">2.57%</div>
<div class="t" style="left:207.3px;top:821.07px;font-size:11.5px;color:#222">SOLICITAÇÃO DE NEGOCIAÇÃO</div>
<div class="card" style="left:614px;top:473px;width:515px;height:384px"></div>
<div class="t title" style="left:631px;top:490.06px">Últimas sessões</div>
<svg style="left:761.8px;top:491.5px" width="14" height="14" viewBox="0 0 14 14"><rect x="5.7" y="6.8" width="2.6" height="4.2" fill="#b5abf7"/><path d="M1.9,2.2h10.2L8.3,6.8V11.2H5.7V6.8Z" fill="none" stroke="#7c70ea" stroke-width="1.25" stroke-linejoin="round"/></svg>
<svg style="left:782.7px;top:490.5px" width="16" height="16" viewBox="0 0 16 16"><circle cx="8" cy="8" r="6.8" fill="none" stroke="#555" stroke-width="1.4"/><path d="M6.2,6.3a1.9,1.9,0,1,1,2.6,1.8c-0.5,0.2-0.8,0.6-0.8,1.1v0.5" fill="none" stroke="#555" stroke-width="1.4" stroke-linecap="round"/><circle cx="8" cy="11.6" r="0.8" fill="#555"/></svg>
<div class="a" style="left:615px;top:515px;width:513px;height:324px;overflow:hidden">
<div class="a" style="left:15.8px;top:5px;width:462px;height:43px;border:1px solid #e4e4e4;border-radius:8px;background:#fff;box-shadow:0 1px 2px rgba(0,0,0,0.06)">
<div class="t" style="left:8.2px;top:11.05px;font-size:14px;color:#222">Érica Alves</div>
<div class="a" style="left:262.2px;top:7.6px;width:189.5px;height:25.4px;border-radius:7px;background:#f3f3f3"></div>
<div class="t" style="left:262.2px;width:189.5px;text-align:center;top:15.20px;font-size:13px;color:#2a2a2a;letter-spacing:0.15px">NEGOCIAÇÃO CONCLUÍDA</div>
</div>
<div class="a" style="left:15.8px;top:57px;width:462px;height:43px;border:1px solid #e4e4e4;border-radius:8px;background:#fff;box-shadow:0 1px 2px rgba(0,0,0,0.06)">
<div class="t" style="left:8.2px;top:11.05px;font-size:14px;color:#222">Ruimara</div>
<div class="a" style="left:262.2px;top:7.6px;width:189.5px;height:25.4px;border-radius:7px;background:#f3f3f3"></div>
<div class="t" style="left:262.2px;width:189.5px;text-align:center;top:15.20px;font-size:13px;color:#2a2a2a;letter-spacing:0.15px">NEGOCIAÇÃO CONCLUÍDA</div>
<div class="a" style="left:61px;top:11px;width:24px;height:19px;border-radius:10px;background:rgba(0,0,0,0.035);filter:blur(4px)"></div>
</div>
<div class="a" style="left:15.8px;top:109px;width:462px;height:43px;border:1px solid #e4e4e4;border-radius:8px;background:#fff;box-shadow:0 1px 2px rgba(0,0,0,0.06)">
<div class="t" style="left:8.2px;top:11.05px;font-size:14px;color:#222">henrique</div>
<div class="a" style="left:237.2px;top:7.6px;width:214.5px;height:25.4px;border-radius:7px;background:#f3f3f3"></div>
<div class="t" style="left:237.2px;width:214.5px;text-align:center;top:15.20px;font-size:13px;color:#2a2a2a;letter-spacing:0.15px">DESBLOQUEIO DE CONFIANÇA</div>
</div>
<div class="a" style="left:15.8px;top:161px;width:462px;height:43px;border:1px solid #e4e4e4;border-radius:8px;background:#fff;box-shadow:0 1px 2px rgba(0,0,0,0.06)">
<div class="t" style="left:8.2px;top:11.05px;font-size:14px;color:#222">Kalila</div>
<div class="a" style="left:336.2px;top:7.6px;width:115.5px;height:25.4px;border-radius:7px;background:#f3f3f3"></div>
<div class="t" style="left:336.2px;width:115.5px;text-align:center;top:15.20px;font-size:13px;color:#2a2a2a;letter-spacing:0.15px">SEM CONEXÃO</div>
</div>
<div class="a" style="left:15.8px;top:213px;width:462px;height:43px;border:1px solid #e4e4e4;border-radius:8px;background:#fff;box-shadow:0 1px 2px rgba(0,0,0,0.06)">
<div class="t" style="left:8.2px;top:11.05px;font-size:14px;color:#222">Felipe</div>
<div class="a" style="left:262.2px;top:7.6px;width:189.5px;height:25.4px;border-radius:7px;background:#f3f3f3"></div>
<div class="t" style="left:262.2px;width:189.5px;text-align:center;top:15.20px;font-size:13px;color:#2a2a2a;letter-spacing:0.15px">NEGOCIAÇÃO CONCLUÍDA</div>
</div>
<div class="a" style="left:15.8px;top:265px;width:462px;height:43px;border:1px solid #e4e4e4;border-radius:8px;background:#fff;box-shadow:0 1px 2px rgba(0,0,0,0.06)">
<div class="t" style="left:8.2px;top:11.05px;font-size:14px;color:#222">Vera Lucia</div>
<div class="a" style="left:287.2px;top:7.6px;width:164.5px;height:25.4px;border-radius:7px;background:#f3f3f3"></div>
<div class="t" style="left:287.2px;width:164.5px;text-align:center;top:15.20px;font-size:13px;color:#2a2a2a;letter-spacing:0.15px">AGENDAMENTO VISITA</div>
</div>
<div class="a" style="left:15.8px;top:317px;width:471px;height:43px;border:1px solid #e4e4e4;border-radius:8px;background:#fff;box-shadow:0 1px 2px rgba(0,0,0,0.06)">
</div>
</div>
<div class="a" style="left:627px;top:605px;width:25px;height:22px;background:#fff"></div>
<div class="card" style="left:1137px;top:473px;width:516px;height:384px"></div>
<div class="t title" style="left:1154.5px;top:490.06px">Avaliação</div>
<svg style="left:1234.8px;top:491.5px" width="14" height="14" viewBox="0 0 14 14"><rect x="5.7" y="6.8" width="2.6" height="4.2" fill="#b5abf7"/><path d="M1.9,2.2h10.2L8.3,6.8V11.2H5.7V6.8Z" fill="none" stroke="#7c70ea" stroke-width="1.25" stroke-linejoin="round"/></svg>
<svg style="left:1255.7px;top:490.5px" width="16" height="16" viewBox="0 0 16 16"><circle cx="8" cy="8" r="6.8" fill="none" stroke="#555" stroke-width="1.4"/><path d="M6.2,6.3a1.9,1.9,0,1,1,2.6,1.8c-0.5,0.2-0.8,0.6-0.8,1.1v0.5" fill="none" stroke="#555" stroke-width="1.4" stroke-linecap="round"/><circle cx="8" cy="11.6" r="0.8" fill="#555"/></svg>
<div class="t" style="left:1154.5px;top:513.14px;font-size:12px;color:#777;letter-spacing:0.1px">Pendentes:</div>
<div class="a" style="left:1224px;top:508.5px;width:73.5px;height:21px;border:1px solid #e3e3e3;border-radius:7px;background:#f7f7f7"></div>
<div class="t" style="left:1229px;top:513.22px;font-size:12.5px;color:#555">970 Agente</div>
<div class="a" style="left:1306px;top:508.5px;width:101.5px;height:21px;border:1px solid #e3e3e3;border-radius:7px;background:#f7f7f7"></div>
<div class="t" style="left:1311.5px;top:513.22px;font-size:12.5px;color:#555">83 Coordenador</div>
<svg style="left:0;top:0" width="1699" height="1036" viewBox="0 0 1699 1036">
<line x1="1154.5" y1="562.2" x2="1636.4" y2="562.2" stroke="#f1f1f1" stroke-width="1"/>
<line x1="1154.5" y1="627" x2="1636.4" y2="627" stroke="#f1f1f1" stroke-width="1"/>
<line x1="1154.5" y1="692.1" x2="1636.4" y2="692.1" stroke="#f1f1f1" stroke-width="1"/>
<line x1="1154.5" y1="756.1" x2="1636.4" y2="756.1" stroke="#f1f1f1" stroke-width="1"/>
<path d="M1170.3,659.8h127.6v155.6a4,4,0,0,1,-4,4h-119.6a4,4,0,0,1,-4,-4Z" fill="#5e37a8"/>
<path d="M1170.3,643.2h127.6v16.6h-127.6Z" fill="#ef8547"/>
<line x1="1234.1" y1="819.4" x2="1234.1" y2="825.4" stroke="#999" stroke-width="1"/>
<path d="M1330.7,800.6h127.6v14.8a4,4,0,0,1,-4,4h-119.6a4,4,0,0,1,-4,-4Z" fill="#5e37a8"/>
<path d="M1330.7,797.6h127.6v3.0h-127.6Z" fill="#ef8547"/>
<line x1="1394.5" y1="819.4" x2="1394.5" y2="825.4" stroke="#999" stroke-width="1"/>
<path d="M1491.5,813.6h127.6v1.8a4,4,0,0,1,-4,4h-119.6a4,4,0,0,1,-4,-4Z" fill="#5e37a8"/>
<line x1="1555.3" y1="819.4" x2="1555.3" y2="825.4" stroke="#999" stroke-width="1"/>
<line x1="1154.5" y1="819.4" x2="1636.4" y2="819.4" stroke="#a0a0a0" stroke-width="1.5"/>
</svg>
<div class="t" style="left:1204.1px;width:60px;text-align:center;top:629.04px;font-size:12px;font-weight:700;color:#1a1a1a">4123</div>
<div class="t" style="left:1184.1px;width:100px;text-align:center;top:825.84px;font-size:12px;color:#666">Bom (86%)</div>
<div class="t" style="left:1364.5px;width:60px;text-align:center;top:783.40px;font-size:12px;font-weight:700;color:#1a1a1a">511</div>
<div class="t" style="left:1344.5px;width:100px;text-align:center;top:825.84px;font-size:12px;color:#666">Neutro (11%)</div>
<div class="t" style="left:1525.3px;width:60px;text-align:center;top:799.43px;font-size:12px;font-weight:700;color:#1a1a1a">136</div>
<div class="t" style="left:1505.3px;width:100px;text-align:center;top:825.84px;font-size:12px;color:#666">Ruim (3%)</div>
<div class="t" style="left:1204.00px;width:60px;text-align:center;top:732.92px;font-size:12.5px;color:#fff">3734</div>
<div class="card" style="left:90px;top:865px;width:1039px;height:135px"></div>
<div class="t title" style="left:107.5px;top:882.16px">Tempo médio</div>
<svg style="left:0;top:0" width="1699" height="1036" viewBox="0 0 1699 1036">
<line x1="639.5" y1="912" x2="639.5" y2="982" stroke="#f1f1f1" stroke-width="1"/>
<line x1="859.5" y1="912" x2="859.5" y2="982" stroke="#f1f1f1" stroke-width="1"/>
<line x1="1079.5" y1="912" x2="1079.5" y2="982" stroke="#f1f1f1" stroke-width="1"/>
<rect x="199" y="915.7" width="851.7" height="27.1" rx="4.5" fill="#5e37a8"/>
<rect x="199" y="951.3" width="415.3" height="27.4" rx="4.5" fill="#ef8547"/>
</svg>
<div class="t" style="left:83px;width:100px;text-align:right;top:923.92px;font-size:12.5px;color:#666">Atendimento</div>
<div class="t" style="left:83px;width:100px;text-align:right;top:958.92px;font-size:12.5px;color:#666">Espera</div>
<div class="t" style="left:1056px;top:924.04px;font-size:12px;color:#333;transform:scaleX(0.84);transform-origin:0 50%">3:13</div>
<div class="t" style="left:619.7px;top:959.04px;font-size:12px;color:#333;transform:scaleX(0.84);transform-origin:0 50%">1:34</div>
<div class="card" style="left:1137px;top:865px;width:516px;height:135px"></div>
<div class="t title" style="left:1154.8px;top:882.46px">Tokens</div>
<svg style="left:1215.2px;top:883.7px" width="14" height="14" viewBox="0 0 14 14"><rect x="5.7" y="6.8" width="2.6" height="4.2" fill="#b5abf7"/><path d="M1.9,2.2h10.2L8.3,6.8V11.2H5.7V6.8Z" fill="none" stroke="#7c70ea" stroke-width="1.25" stroke-linejoin="round"/></svg>
<svg style="left:1235.8px;top:882.7px" width="16" height="16" viewBox="0 0 16 16"><circle cx="8" cy="8" r="6.8" fill="none" stroke="#555" stroke-width="1.4"/><path d="M6.2,6.3a1.9,1.9,0,1,1,2.6,1.8c-0.5,0.2-0.8,0.6-0.8,1.1v0.5" fill="none" stroke="#555" stroke-width="1.4" stroke-linecap="round"/><circle cx="8" cy="11.6" r="0.8" fill="#555"/></svg>
<div class="t big" style="left:1154.5px;top:909.68px">735.565.713</div>
<div class="a" style="left:1155px;top:955.4px;width:170px;height:23.8px;border-radius:7px;background:#e8f0fc"></div>
<div class="t" style="left:1162.7px;top:960.47px;font-size:13.5px;font-weight:700;color:#4a83d6;letter-spacing:0.65px">369.873.646 em cache</div>

</body></html>
